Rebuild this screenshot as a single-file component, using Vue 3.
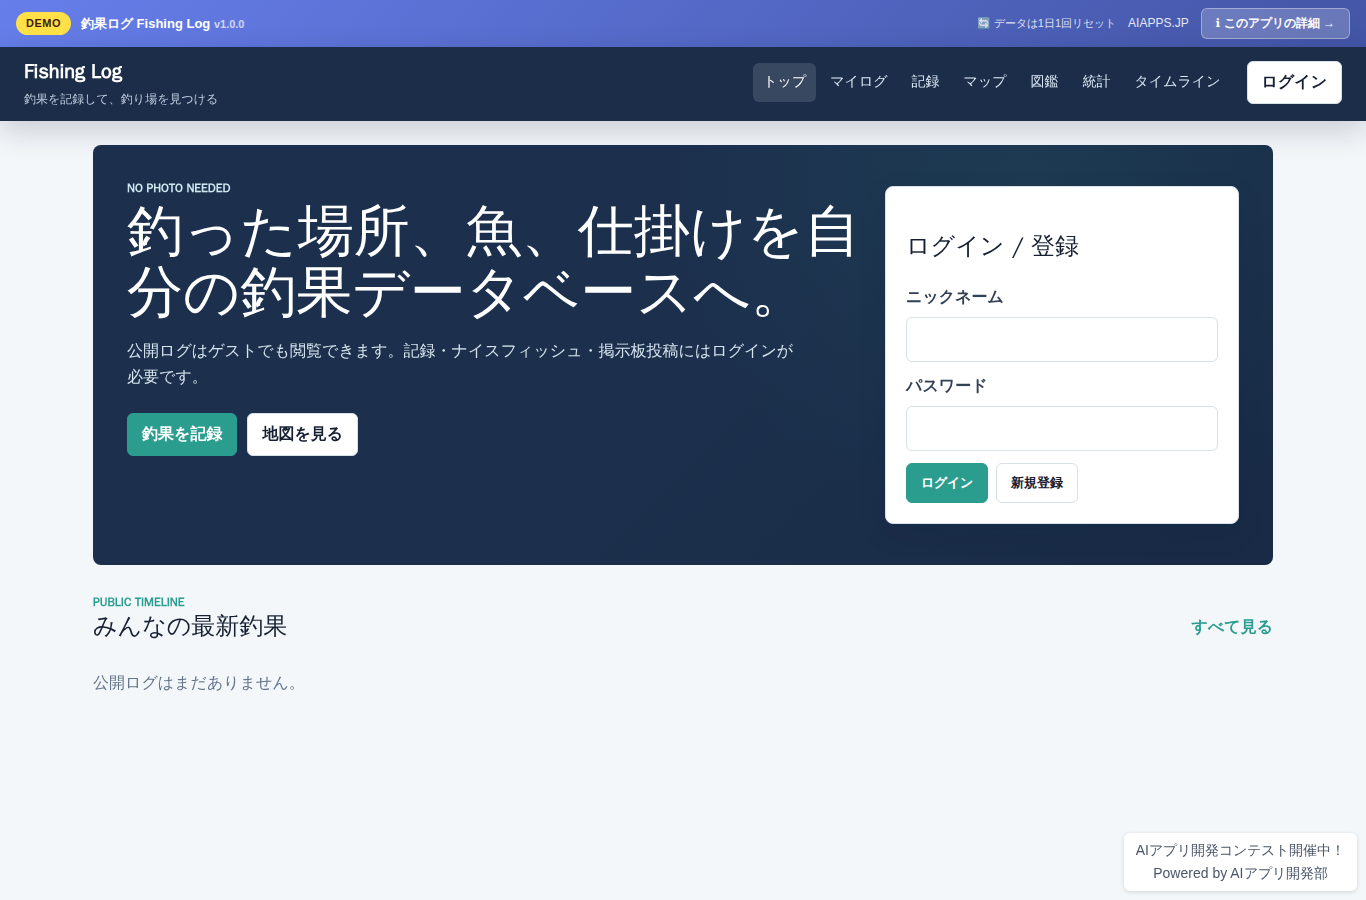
<script setup>
import { ref } from 'vue'

const navItems = ['トップ', 'マイログ', '記録', 'マップ', '図鑑', '統計', 'タイムライン']
const active = ref('トップ')
const nickname = ref('')
const password = ref('')
</script>

<template>
  <div class="page" lang="ja">
    <div class="demo-bar">
      <div class="demo-left">
        <span class="demo-badge">DEMO</span>
        <span class="demo-title">釣果ログ Fishing Log <span class="version">v1.0.0</span></span>
      </div>
      <div class="demo-right">
        <span class="reset-note">🔄 データは1日1回リセット</span>
        <a class="demo-link" href="#">AIAPPS.JP</a>
        <a class="detail-link" href="#"><span class="info">ℹ</span> このアプリの詳細 →</a>
      </div>
    </div>

    <header class="site-header">
      <div class="brand">
        <a class="brand-name" href="#">Fishing Log</a>
        <span class="tagline">釣果を記録して、釣り場を見つける</span>
      </div>
      <nav class="nav">
        <a
          v-for="item in navItems"
          :key="item"
          href="#"
          class="nav-link"
          :class="{ active: item === active }"
          @click.prevent="active = item"
        >{{ item }}</a>
        <button class="btn login-btn" type="button">ログイン</button>
      </nav>
    </header>

    <main class="main">
      <section class="hero">
        <div class="hero-text">
          <p class="eyebrow">NO PHOTO NEEDED</p>
          <h1>釣った場所、魚、仕掛けを自分の釣果データベースへ。</h1>
          <p class="lead">公開ログはゲストでも閲覧できます。記録・ナイスフィッシュ・掲示板投稿にはログインが必要です。</p>
          <div class="actions">
            <a class="btn primary" href="#">釣果を記録</a>
            <a class="btn" href="#">地図を見る</a>
          </div>
        </div>
        <form class="card" @submit.prevent>
          <h2>ログイン / 登録</h2>
          <label for="nickname">ニックネーム</label>
          <input id="nickname" v-model="nickname" type="text" autocomplete="username" />
          <label for="password">パスワード</label>
          <input id="password" v-model="password" type="password" autocomplete="current-password" />
          <div class="form-actions">
            <button class="btn small primary" type="submit">ログイン</button>
            <button class="btn small" type="button">新規登録</button>
          </div>
        </form>
      </section>

      <section class="timeline">
        <div class="section-head">
          <div>
            <p class="eyebrow green">PUBLIC TIMELINE</p>
            <h2>みんなの最新釣果</h2>
          </div>
          <a class="more" href="#">すべて見る</a>
        </div>
        <p class="empty">公開ログはまだありません。</p>
      </section>
    </main>

    <aside class="contest">
      <a href="#">AIアプリ開発コンテスト開催中！</a>
      <a href="#">Powered by AIアプリ開発部</a>
    </aside>
  </div>
</template>

<style>
body {
  margin: 0;
  background: #f3f7fa;
}
</style>

<style scoped>
* {
  box-sizing: border-box;
}
.page {
  font-family: "WenQuanYi Zen Hei", "Noto Sans CJK JP", sans-serif;
  font-size: 16px;
  line-height: 26px;
  color: #172033;
}
a {
  color: inherit;
  text-decoration: none;
}
p,
h1,
h2 {
  margin: 0;
}
.demo-bar {
  display: flex;
  align-items: center;
  justify-content: space-between;
  padding: 8px 16px;
  font-family: "Liberation Sans", sans-serif;
  line-height: 17px;
  color: #fff;
  background: linear-gradient(135deg, #667eea 0%, #4355a5 100%);
}
.demo-left {
  display: flex;
  align-items: center;
  gap: 10px;
}
.demo-right {
  display: flex;
  align-items: center;
  gap: 12px;
}
.demo-badge {
  padding: 3px 10px;
  border-radius: 20px;
  background: #ffe047;
  color: #422006;
  font-size: 11px;
  font-weight: 700;
  letter-spacing: 0.5px;
}
.demo-title {
  font-size: 13px;
  font-weight: 700;
}
.version {
  font-size: 11px;
  opacity: 0.7;
}
.reset-note {
  font-size: 11px;
  opacity: 0.8;
}
.demo-link {
  font-size: 12px;
  opacity: 0.85;
}
.detail-link {
  padding: 6px 14px;
  border: 1px solid rgba(255, 255, 255, 0.35);
  border-radius: 6px;
  background: rgba(255, 255, 255, 0.2);
  font-size: 12px;
  font-weight: 700;
}
.info {
  font-family: "DejaVu Sans", sans-serif;
}
.site-header {
  display: flex;
  align-items: flex-start;
  justify-content: space-between;
  padding: 14px 24px 10px;
  background: #1b2d49;
  color: #fff;
  box-shadow: 0 10px 30px rgba(15, 23, 42, 0.18);
}
.brand {
  display: flex;
  flex-direction: column;
  gap: 4px;
}
.brand-name {
  font-size: 20px;
  font-weight: 800;
  line-height: 22px;
}
.tagline {
  font-size: 12px;
  line-height: 24px;
  color: #bdcbdc;
}
.nav {
  display: flex;
  align-items: center;
  gap: 4px;
}
.nav-link {
  padding: 7px 10px 9px;
  border-radius: 6px;
  font-size: 14px;
  line-height: 23px;
  color: #dbe7f3;
}
.nav-link.active {
  background: rgba(255, 255, 255, 0.13);
  color: #fff;
}
.btn {
  padding: 8px 14px;
  border: 1px solid #d8e0ea;
  border-radius: 6px;
  background: #fff;
  color: #172033;
  font-family: inherit;
  font-size: 16px;
  font-weight: 800;
  line-height: 25px;
}
.btn.primary {
  border-color: #2a9d8f;
  background: #2a9d8f;
  color: #fff;
}
.btn.small {
  font-family: "Liberation Sans", sans-serif;
  font-size: 13px;
  line-height: 22px;
}
.login-btn {
  margin-left: 12px;
}
.main {
  max-width: 1180px;
  margin: 24px auto 0;
}
.hero {
  display: grid;
  grid-template-columns: minmax(0, 1fr) 354px;
  gap: 24px;
  min-height: 420px;
  padding: 34px;
  border-radius: 8px;
  background:
    radial-gradient(circle at 80% 10%, rgba(42, 157, 143, 0.1), transparent 36%),
    linear-gradient(135deg, #1c304d 50%, #182a45);
}
.eyebrow {
  font-size: 12px;
  font-weight: 800;
  line-height: 19px;
  color: #cfe8f0;
}
.eyebrow.green {
  color: #2a9d8f;
}
h1 {
  margin-top: 3px;
  font-size: 56px;
  font-weight: 400;
  line-height: 61px;
  color: #fff;
}
.lead {
  max-width: 680px;
  margin-top: 15px;
  color: #d6e4ee;
}
.actions {
  display: flex;
  gap: 10px;
  margin-top: 23px;
}
.card {
  align-self: center;
  display: flex;
  flex-direction: column;
  padding: 20px;
  border: 1px solid #d8e0ea;
  border-radius: 8px;
  background: #fff;
  box-shadow: 0 10px 30px rgba(15, 23, 42, 0.08);
}
h2 {
  font-size: 24px;
  font-weight: 400;
  line-height: 38px;
}
.card h2 {
  margin: 20px 0;
}
label {
  margin-bottom: 7px;
  font-weight: 800;
  line-height: 25px;
  color: #334155;
}
input {
  width: 100%;
  height: 45px;
  margin-bottom: 12px;
  padding: 10px 12px;
  border: 1px solid #d8e0ea;
  border-radius: 6px;
  background: #fff;
  font: inherit;
}
.form-actions {
  display: flex;
  gap: 8px;
}
.timeline {
  margin-top: 28px;
}
.section-head {
  display: flex;
  align-items: flex-end;
  justify-content: space-between;
}
.section-head h2 {
  line-height: 29px;
}
.more {
  font-weight: 800;
  line-height: 28px;
  color: #2a9d8f;
}
.empty {
  margin-top: 29px;
  color: #64748b;
}
.contest {
  position: fixed;
  right: 9px;
  bottom: 9px;
  display: flex;
  flex-direction: column;
  padding: 6px 12px;
  border-radius: 6px;
  background: #fff;
  box-shadow: 0 1px 4px rgba(0, 0, 0, 0.14);
  font-family: "Liberation Sans", sans-serif;
  font-size: 14px;
  line-height: 23px;
  text-align: center;
  color: #4a5568;
}
</style>
